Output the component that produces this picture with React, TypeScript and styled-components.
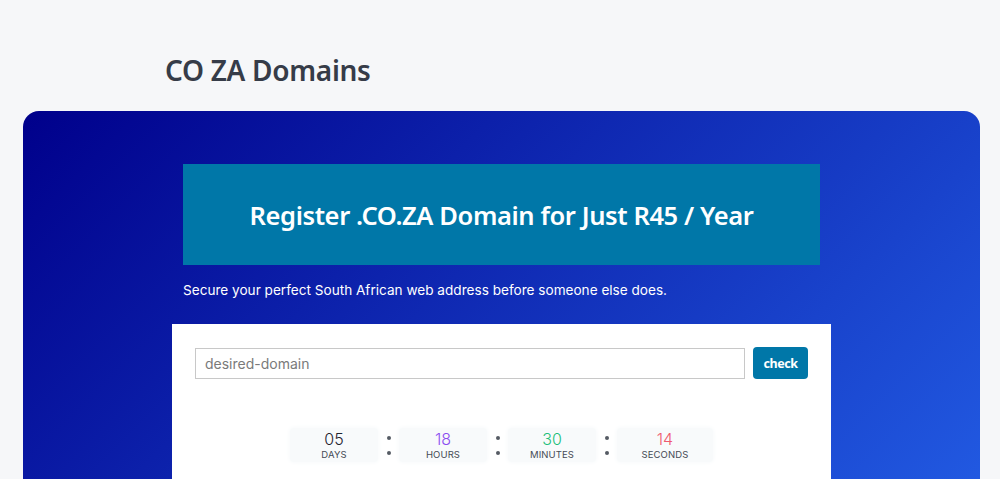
import { Fragment } from 'react';
import styled, { createGlobalStyle } from 'styled-components';

const GlobalStyle = createGlobalStyle`
  * { box-sizing: border-box; }
  body {
    margin: 0;
    background: #f6f7f9;
    font-family: 'Noto Sans', 'Open Sans', sans-serif;
    overflow: hidden;
  }
`;

const Page = styled.div`
  padding: 0 20px 0 23px;
`;

const Title = styled.h1`
  margin: 0;
  padding: 52px 0 22px 142px;
  font-size: 28px;
  font-weight: 600;
  line-height: 37px;
  color: #363c48;
  letter-spacing: -0.3px;
`;

const Hero = styled.section`
  min-height: 520px;
  border-radius: 16px;
  background: linear-gradient(135deg, #00008b 0%, #2563eb 100%);
  padding: 53px 160px 0 160px;
  display: flex;
  flex-direction: column;
`;

const Banner = styled.div`
  height: 101px;
  background: #0077a8;
  display: flex;
  align-items: center;
  justify-content: center;
  color: #ffffff;
  font-size: 25.5px;
  font-weight: 600;
  letter-spacing: -0.4px;
`;

const Subtitle = styled.p`
  margin: 16px 0 0 0;
  color: #ffffff;
  font-family: 'Inter', sans-serif;
  font-size: 13.6px;
  line-height: 18px;
`;

const Card = styled.div`
  margin: 25px -11px 0 -11px;
  background: #ffffff;
  padding: 23px 23px 40px 23px;
  display: flex;
  flex-direction: column;
`;

const SearchRow = styled.form`
  display: flex;
  gap: 8px;
  align-items: center;
`;

const DomainInput = styled.input`
  flex: 1;
  height: 31px;
  border: 1px solid #c8c8c8;
  padding: 0 9px;
  font-family: 'Inter', sans-serif;
  font-size: 14px;
  color: #333;
  outline: none;
  &::placeholder { color: #7a7a7a; }
`;

const CheckButton = styled.button`
  width: 55px;
  height: 32px;
  border: none;
  border-radius: 4px;
  background: #0077a8;
  color: #ffffff;
  font-family: 'Noto Sans', sans-serif;
  font-weight: 700;
  font-size: 12.5px;
  letter-spacing: -0.4px;
  cursor: pointer;
`;

const Countdown = styled.div`
  margin-top: 49px;
  display: flex;
  justify-content: center;
  align-items: center;
`;

const TimeBox = styled.div<{ $w: number }>`
  width: ${(p) => p.$w}px;
  height: 34px;
  background: #f8fafb;
  box-shadow: 0 0 4px 1px #f8fafb;
  border-radius: 4px;
  display: flex;
  flex-direction: column;
  align-items: center;
  justify-content: center;
  font-family: 'Inter', sans-serif;
`;

const TimeValue = styled.span<{ $color: string }>`
  font-size: 16px;
  font-weight: 300;
  line-height: 18px;
  color: ${(p) => p.$color};
`;

const TimeLabel = styled.span`
  font-size: 9.5px;
  line-height: 13px;
  color: #454b55;
  letter-spacing: 0.1px;
`;

const Separator = styled.div`
  width: 21px;
  display: flex;
  flex-direction: column;
  align-items: center;
  gap: 11px;
  &::before, &::after {
    content: '';
    width: 4px;
    height: 4px;
    border-radius: 50%;
    background: #555b64;
  }
`;

const units = [
  { value: '05', label: 'DAYS', color: '#1f2430', w: 88 },
  { value: '18', label: 'HOURS', color: '#8b4df0', w: 88 },
  { value: '30', label: 'MINUTES', color: '#1fbf7a', w: 88 },
  { value: '14', label: 'SECONDS', color: '#ef5a6f', w: 96 },
];

export default function App() {
  return (
    <Page>
      <GlobalStyle />
      <Title>CO ZA Domains</Title>
      <Hero>
        <Banner>Register .CO.ZA Domain for Just R45 / Year</Banner>
        <Subtitle>Secure your perfect South African web address before someone else does.</Subtitle>
        <Card>
          <SearchRow onSubmit={(e) => e.preventDefault()}>
            <DomainInput placeholder="desired-domain" />
            <CheckButton type="submit">check</CheckButton>
          </SearchRow>
          <Countdown>
            {units.map((u, i) => (
              <Fragment key={u.label}>
                {i > 0 && <Separator />}
                <TimeBox $w={u.w}>
                  <TimeValue $color={u.color}>{u.value}</TimeValue>
                  <TimeLabel>{u.label}</TimeLabel>
                </TimeBox>
              </Fragment>
            ))}
          </Countdown>
        </Card>
      </Hero>
    </Page>
  );
}
